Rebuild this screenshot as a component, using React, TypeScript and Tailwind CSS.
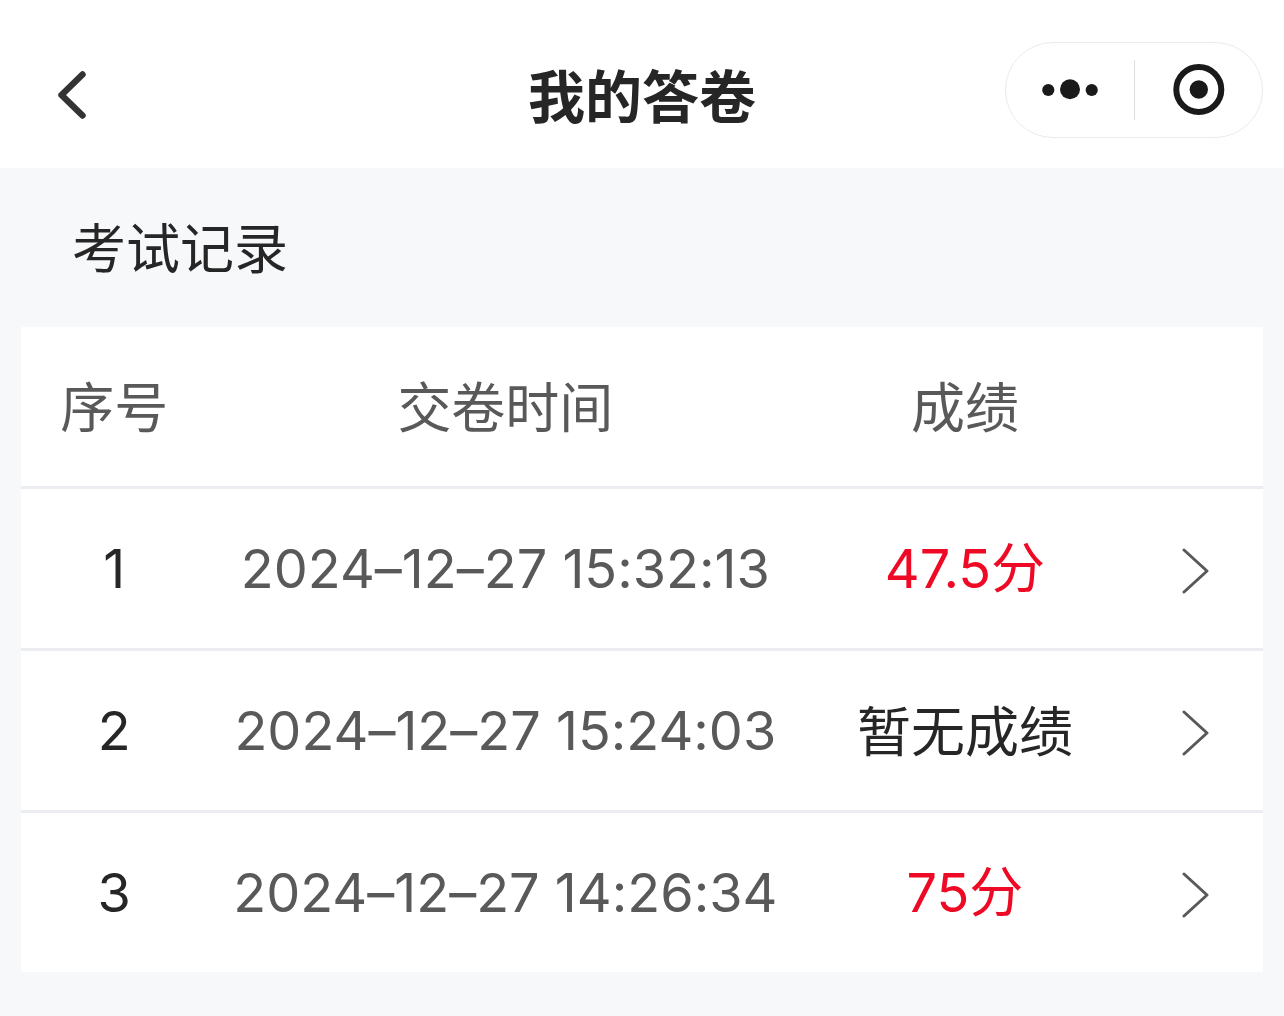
import React from "react";

const records = [
  { id: 1, time: "2024–12–27 15:32:13", score: "47.5分", graded: true },
  { id: 2, time: "2024–12–27 15:24:03", score: "暂无成绩", graded: false },
  { id: 3, time: "2024–12–27 14:26:34", score: "75分", graded: true },
];

export default function App() {
  return (
    <div className="min-h-screen bg-[#f7f8fa] font-['Inter','Noto_Sans_CJK_SC',sans-serif] text-[#262626] [font-feature-settings:'calt'_0]">
      <header className="grid h-42 grid-cols-[1fr_auto_1fr] items-center bg-white px-[21px] pt-3">
        <button type="button" aria-label="返回" className="mt-2.5 justify-self-start pl-[35px]">
          <svg width="32" height="52" viewBox="0 0 32 52" fill="none" stroke="#333333" strokeWidth="6.4" strokeLinecap="round" strokeLinejoin="round">
            <path d="M26.5 5.5 5.5 26 26.5 46.5" />
          </svg>
        </button>
        <h1 className="mt-4 text-[57px] leading-[80px] font-bold">我的答卷</h1>
        <div className="flex h-24 w-[258px] items-center justify-self-end rounded-full border border-[#ebebeb]">
          <button type="button" aria-label="更多" className="flex h-full flex-1 items-center justify-center">
            <svg width="56" height="22" viewBox="0 0 56 22" fill="#1a1a1a">
              <circle cx="6.3" cy="11" r="6.1" />
              <circle cx="28" cy="10.2" r="10" />
              <circle cx="49.7" cy="11" r="6.1" />
            </svg>
          </button>
          <span className="h-15 w-px bg-[#dedede]" />
          <button type="button" aria-label="关闭" className="flex h-full flex-1 items-center justify-center">
            <svg width="54" height="52" viewBox="0 0 54 52">
              <circle cx="27.8" cy="25.5" r="22.5" fill="none" stroke="#1a1a1a" strokeWidth="6" />
              <circle cx="27.8" cy="25.5" r="9.2" fill="#1a1a1a" />
            </svg>
          </button>
        </div>
      </header>
      <main className="px-[21px] pb-11">
        <h2 className="flex h-[159px] items-center pt-1 pl-[51px] text-[54px] leading-[80px]">考试记录</h2>
        <table className="w-full table-fixed border-separate border-spacing-0 bg-white text-center text-[54px] leading-[80px] text-[#595959]">
          <colgroup>
            <col className="w-[15%]" />
            <col className="w-[48%]" />
            <col className="w-[26%]" />
            <col className="w-[11%]" />
          </colgroup>
          <thead>
            <tr className="h-[162px] *:border-b-3 *:border-[#ebedf0] *:pt-1">
              <th className="font-normal">序号</th>
              <th className="font-normal">交卷时间</th>
              <th className="font-normal">成绩</th>
              <td />
            </tr>
          </thead>
          <tbody>
            {records.map((r) => (
              <tr key={r.id} className="h-[162px] *:border-b-3 *:border-[#ebedf0] last:h-[159px] last:*:border-b-0">
                <td className="text-[#262626]">{r.id}</td>
                <td className="whitespace-nowrap">{r.time}</td>
                <td className={r.graded ? "text-[#ee0a24]" : "pt-1 text-[#262626]"}>{r.score}</td>
                <td>
                  <button type="button" aria-label="查看详情" className="flex w-full justify-end pt-1 pr-[53px]">
                    <svg className="shrink-0" width="28" height="48" viewBox="0 0 28 48" fill="none" stroke="#595959" strokeWidth="3" strokeLinecap="round" strokeLinejoin="round">
                      <path d="M2 3 25 24 2 45" />
                    </svg>
                  </button>
                </td>
              </tr>
            ))}
          </tbody>
        </table>
      </main>
    </div>
  );
}
